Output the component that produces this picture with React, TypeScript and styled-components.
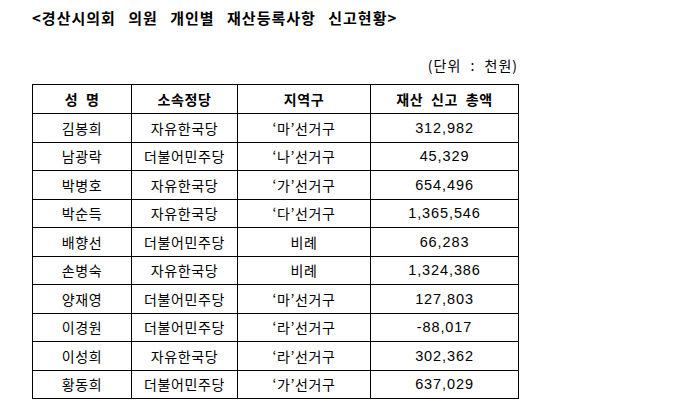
import styled, { createGlobalStyle } from "styled-components";

const GlobalStyle = createGlobalStyle`
  html, body {
    margin: 0;
    padding: 0;
    background: #ffffff;
  }
  body {
    font-family: "Noto Sans CJK KR", "Noto Sans", sans-serif;
    color: #000000;
  }
`;

const Page = styled.div`
  width: 689px;
  height: 408px;
  box-sizing: border-box;
  padding: 8px 0 0 32px;
  display: flex;
  flex-direction: column;
`;

const Title = styled.h1`
  margin: 0;
  font-size: 15px;
  font-weight: 700;
  line-height: 20px;
  letter-spacing: 1px;
  word-spacing: 8px;
  white-space: nowrap;
`;

const Unit = styled.div`
  width: 486px;
  margin-top: 27px;
  text-align: right;
  font-size: 14px;
  line-height: 20px;
  letter-spacing: 1px;
  word-spacing: 5px;
`;

const Table = styled.table`
  margin-top: 9px;
  width: 486px;
  border-collapse: collapse;
  table-layout: fixed;
`;

const HeadCell = styled.th`
  height: 28px;
  padding: 0;
  border: 1px solid #000;
  font-size: 14px;
  font-weight: 700;
  letter-spacing: 0.6px;
  word-spacing: 4px;
  text-align: center;
`;

const Cell = styled.td<{ $num?: boolean }>`
  height: 27.5px;
  padding: 0;
  border: 1px solid #000;
  text-align: center;
  font-size: ${(p) => (p.$num ? "14.5px" : "14px")};
  font-family: ${(p) =>
    p.$num
      ? `"Liberation Sans", "Noto Sans CJK KR", sans-serif`
      : `"Noto Sans CJK KR", sans-serif`};
  letter-spacing: ${(p) => (p.$num ? "0.9px" : "0.6px")};
  white-space: nowrap;
`;

interface Member {
  name: string;
  party: string;
  district: string;
  amount: string;
}

const members: Member[] = [
  { name: "김봉희", party: "자유한국당", district: "‘마’선거구", amount: "312,982" },
  { name: "남광락", party: "더불어민주당", district: "‘나’선거구", amount: "45,329" },
  { name: "박병호", party: "자유한국당", district: "‘가’선거구", amount: "654,496" },
  { name: "박순득", party: "자유한국당", district: "‘다’선거구", amount: "1,365,546" },
  { name: "배향선", party: "더불어민주당", district: "비례", amount: "66,283" },
  { name: "손병숙", party: "자유한국당", district: "비례", amount: "1,324,386" },
  { name: "양재영", party: "더불어민주당", district: "‘마’선거구", amount: "127,803" },
  { name: "이경원", party: "더불어민주당", district: "‘라’선거구", amount: "-88,017" },
  { name: "이성희", party: "자유한국당", district: "‘라’선거구", amount: "302,362" },
  { name: "황동희", party: "더불어민주당", district: "‘가’선거구", amount: "637,029" },
];

function App() {
  return (
    <>
      <GlobalStyle />
      <Page>
        <Title>&lt;경산시의회 의원 개인별 재산등록사항 신고현황&gt;</Title>
        <Unit>(단위 : 천원)</Unit>
        <Table>
          <colgroup>
            <col style={{ width: 99 }} />
            <col style={{ width: 106 }} />
            <col style={{ width: 133 }} />
            <col style={{ width: 148 }} />
          </colgroup>
          <thead>
            <tr>
              <HeadCell>성 명</HeadCell>
              <HeadCell>소속정당</HeadCell>
              <HeadCell>지역구</HeadCell>
              <HeadCell>재산 신고 총액</HeadCell>
            </tr>
          </thead>
          <tbody>
            {members.map((m) => (
              <tr key={m.name}>
                <Cell>{m.name}</Cell>
                <Cell>{m.party}</Cell>
                <Cell>{m.district}</Cell>
                <Cell $num>{m.amount}</Cell>
              </tr>
            ))}
          </tbody>
        </Table>
      </Page>
    </>
  );
}

export default App;
